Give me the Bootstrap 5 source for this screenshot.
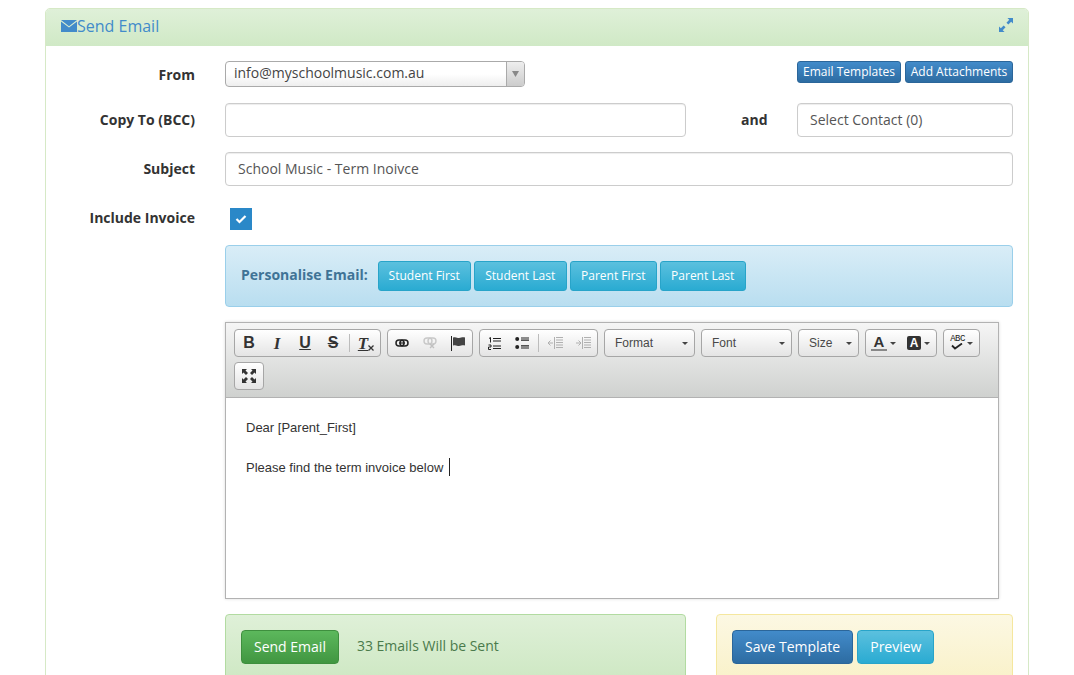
<!DOCTYPE html>
<html lang="en">
<head>
<meta charset="utf-8">
<title>Send Email</title>
<link rel="stylesheet" href="https://cdn.jsdelivr.net/npm/bootstrap@5.3.0/dist/css/bootstrap.min.css">
<style>
html,body{height:675px;overflow:hidden;background:#fff}
body{font-family:"Open Sans",sans-serif;font-size:14px;color:#555}
.mail-panel{margin:8px 45px 0;border:1px solid #d6e9c6;border-radius:5px;height:800px;background:#fff}
.mail-head{height:37px;padding:0 15px 3px;background:linear-gradient(#dff0d8,#d0e9c6);border-radius:4px 4px 0 0;color:#428bca;font-size:16px}
.exp-ico{margin-top:-3px;margin-right:0}
.mail-body{padding:15px 15px 0 15px}
.lbl{width:134px;text-align:right;font-weight:700;color:#333;margin-right:30px;flex:none;padding-bottom:2px}
.lbl-top{padding:3px 0 0}
.lbl-inc{padding-bottom:4px}
.and-txt{margin-left:55px;font-weight:700;color:#333;padding-bottom:2px}
.r1{height:26px;margin-bottom:16px}
.r2{height:34px;margin-bottom:15px}
.r2b{margin-bottom:22px}
.r4{height:22px;margin-bottom:15px}
.pick{width:300px;height:26px;border:1px solid #aaa;border-radius:4px;background:linear-gradient(#fff 50%,#eee);color:#444;line-height:22px;padding-left:8px;overflow:hidden}
.pick-arrow{width:18px;height:24px;margin-left:auto;background:linear-gradient(#eee,#ccc);border-left:1px solid #aaa;flex:none}
.inp{height:34px;border:1px solid #ccc;border-radius:4px;padding:0 12px;line-height:32px;color:#555;box-shadow:inset 0 1px 1px rgba(0,0,0,.075);background:#fff}
.w-copy{width:461px}
.w-contact{width:216px}
.tiny-row{gap:4px}
.btn.tiny{font-size:12px;line-height:18px;padding:1px 0;border-radius:3px;height:22px}
.w-et{width:104px}
.w-aa{width:108px}
.btn.blue{background:linear-gradient(#428bca,#2d6ca2);border:1px solid #2b669a;color:#fff}
.btn.cyan{background:linear-gradient(#5bc0de,#2aabd2);border:1px solid #28a4c9;color:#fff}
.btn.grn{background:linear-gradient(#5cb85c,#419641);border:1px solid #3e8f3e;color:#fff}
.btn.mid{font-size:14px;line-height:20px;padding:6px 12px;border-radius:4px;height:34px}
.btn.sm2{font-size:12px;line-height:18px;padding:5px 0;border-radius:3px;height:30px}
.w-93{width:93px}
.w-87{width:87px}
.w-86{width:86px}
.tick{width:22px;height:22px;background:#2a88c8;margin-left:5px}
.indent-col{margin-left:164px}
.note{border-radius:4px;border:1px solid}
.note-info{height:62px;padding:0 15px;margin-bottom:15px;background:linear-gradient(#d9edf7,#b9def0);border-color:#9acfea;color:#3f7396;font-weight:700}
.pers-lbl{margin-right:10px;padding-bottom:3px}
.pers-row{gap:3px}
.note-ok{height:90px;width:461px;padding:15px;background:linear-gradient(#dff0d8,#c8e5bc);border-color:#b2dba1;color:#4a7a4b}
.sent-txt{margin:5px 0 0 18px}
.note-warn{height:90px;width:297px;padding:15px;gap:4px;background:linear-gradient(#fcf8e3,#f8efc0);border-color:#f5e79e}
.edt{width:774px;height:277px;border:1px solid #b2b2b2;margin-bottom:15px;box-shadow:0 0 3px rgba(0,0,0,.15)}
.tbar{height:75px;padding:6px 0 0 8px;background:linear-gradient(#f5f5f5,#cfd1cf);border-bottom:1px solid #b2b2b2;display:flex;flex-wrap:wrap;gap:5px 6px;align-content:flex-start}
.tgrp{height:28px;border:1px solid #a6a6a6;border-radius:4px;background:linear-gradient(#fff,#e4e4e4);display:flex;align-items:center;color:#333}
.tb{width:28px;height:26px;display:flex;align-items:center;justify-content:center;font-family:"Liberation Sans",sans-serif;font-size:16px;line-height:1;color:#333;font-weight:700}
.tb-serif{font-family:"Liberation Serif",serif;font-style:italic;font-size:17px}
.tb-under{text-decoration:underline}
.tb-strike{text-decoration:line-through}
.x-sub{margin-top:9px}
.tsep{width:1px;height:18px;margin:0 2px;background:#bcbcbc}
.combo{font-family:"Liberation Sans",sans-serif;font-size:12px;padding:0 6px 0 10px;justify-content:space-between;color:#484848}
.w-91{width:91px}
.w-61{width:61px}
.w-72{width:72px}
.w-37{width:37px}
.w-30{width:30px}
.caret{width:0;height:0;border-left:3px solid transparent;border-right:3px solid transparent;border-top:3px solid #444;flex:none}
.col-btn{width:35px;gap:3px}
.col-a{font-family:"Liberation Sans",sans-serif;font-weight:700;font-size:15px;line-height:14px;border-bottom:2px solid #888;width:16px;text-align:center}
.col-b{font-family:"Liberation Sans",sans-serif;font-weight:700;font-size:12px;line-height:14px;background:#333;color:#fff;width:14px;height:14px;border-radius:2px;text-align:center}
.spell{gap:2px}
.abc{font-size:9px;line-height:7px;font-family:"Liberation Mono",monospace;letter-spacing:-.5px;color:#222}
.edt-text{padding:20px;font-family:"Liberation Sans",sans-serif;font-size:13px;line-height:20px;color:#333}
.edt-text p{margin:0 0 20px}
.cursor{display:inline-block;width:1px;height:18px;background:#222;margin-left:2px;vertical-align:-4px}
</style>
</head>
<body>
<div class="mail-panel">
  <div class="mail-head d-flex align-items-center">
    <svg width="16" height="12" viewBox="0 0 16 12"><path fill="#428bca" d="M0 0h16L8 6.200zM0 1.600l8 6 8-6V12H0z"/></svg>
    <span>Send Email</span>
    <svg class="ms-auto exp-ico" width="14" height="14" viewBox="0 0 15 15"><path fill="#428bca" d="M9 0h6v6l-2-2-3 3-2-2 3-3zM6 15H0V9l2 2 3-3 2 2-3 3z"/></svg>
  </div>
  <div class="mail-body">
    <div class="d-flex r1">
      <div class="lbl lbl-top">From</div>
      <div class="pick d-flex"><span>info@myschoolmusic.com.au</span>
        <div class="pick-arrow d-flex align-items-center justify-content-center"><svg width="7" height="6" viewBox="0 0 7 6"><path fill="#888" d="M0 0h7L3.500 6z"/></svg></div>
      </div>
      <div class="ms-auto d-flex tiny-row">
        <button class="btn tiny blue w-et" type="button">Email Templates</button>
        <button class="btn tiny blue w-aa" type="button">Add Attachments</button>
      </div>
    </div>
    <div class="d-flex r2 align-items-center">
      <div class="lbl">Copy To (BCC)</div>
      <div class="inp w-copy"></div>
      <div class="and-txt">and</div>
      <div class="inp w-contact ms-auto">Select Contact (0)</div>
    </div>
    <div class="d-flex r2 r2b align-items-center">
      <div class="lbl">Subject</div>
      <div class="inp flex-grow-1">School Music - Term Inoivce</div>
    </div>
    <div class="d-flex r4 align-items-center">
      <div class="lbl lbl-inc">Include Invoice</div>
      <div class="tick d-flex align-items-center justify-content-center"><svg width="12" height="10" viewBox="0 0 12 10"><path d="M1.500 5l3 3 6-6" fill="none" stroke="#fff" stroke-width="2.200"/></svg></div>
    </div>
    <div class="indent-col">
      <div class="note note-info d-flex align-items-center">
        <span class="pers-lbl">Personalise Email:</span>
        <div class="d-flex pers-row">
          <button class="btn sm2 cyan w-93" type="button">Student First</button>
          <button class="btn sm2 cyan w-93" type="button">Student Last</button>
          <button class="btn sm2 cyan w-87" type="button">Parent First</button>
          <button class="btn sm2 cyan w-86" type="button">Parent Last</button>
        </div>
      </div>
      <div class="edt">
        <div class="tbar">
          <div class="tgrp">
            <div class="tb">B</div><div class="tb tb-serif">I</div><div class="tb tb-under">U</div><div class="tb tb-strike">S</div><div class="tsep"></div>
            <div class="tb tb-serif"><span class="tb-under">T</span><svg class="x-sub" width="6" height="6" viewBox="0 0 6 6"><path d="M.5.5l5 5M5.500.5l-5 5" stroke="#333" stroke-width="1.300"/></svg></div>
          </div>
          <div class="tgrp">
            <div class="tb"><svg width="14" height="8" viewBox="0 0 14 8"><rect x="1" y="1" width="8" height="6" rx="3" fill="none" stroke="#222" stroke-width="1.500"/><rect x="5" y="1" width="8" height="6" rx="3" fill="none" stroke="#222" stroke-width="1.500"/><path d="M4 4h6" stroke="#222" stroke-width="1.200"/></svg></div>
            <div class="tb"><svg width="14" height="12" viewBox="0 0 14 12"><rect x="1" y="1" width="8" height="6" rx="3" fill="none" stroke="#c8c8c8" stroke-width="1.400"/><rect x="5" y="1" width="8" height="6" rx="3" fill="none" stroke="#c8c8c8" stroke-width="1.400"/><path d="M7 7l4 4M11 7l-4 4" stroke="#c0c0c0" stroke-width="1.400"/></svg></div>
            <div class="tb"><svg width="14" height="15" viewBox="0 0 14 15"><path d="M.5 0v15" stroke="#222"/><path fill="#444" d="M2 1.500c3-1 4 .5 6 .5s3-1 6-.5v8c-3-.5-4 .5-6 .5s-3-1.500-6-.5z"/></svg></div>
          </div>
          <div class="tgrp">
            <div class="tb"><svg width="13" height="13" viewBox="0 0 13 13"><path d="M5 1.500h8M5 4h8M5 9h8M5 11.500h8" stroke="#222" stroke-width="1.200"/><path d="M1 1.500l1.500-1V5.500M.5 8h2.500v2H.5v2.500H3" fill="none" stroke="#222"/></svg></div>
            <div class="tb"><svg width="14" height="12" viewBox="0 0 14 12"><circle cx="2.200" cy="2" r="2" fill="#222"/><circle cx="2.200" cy="10" r="2" fill="#222"/><path d="M6 1h8M6 3.200h8M6 8.800h8M6 11h8" stroke="#222" stroke-width="1.200"/></svg></div>
            <div class="tsep"></div>
            <div class="tb"><svg width="15" height="12" viewBox="0 0 15 12"><path d="M8 .5h7M8 3h7M8 5.500h7M8 8h7M8 10.500h7M6.500 0v12" stroke="#b0b0b0"/><path d="M0 6h5M2.500 3.500L0 6l2.500 2.500" fill="none" stroke="#b0b0b0"/></svg></div>
            <div class="tb"><svg width="15" height="12" viewBox="0 0 15 12"><path d="M8 .5h7M8 3h7M8 5.500h7M8 8h7M8 10.500h7M6.500 0v12" stroke="#b0b0b0"/><path d="M0 6h5M2.500 3.500L5 6l-2.500 2.500" fill="none" stroke="#b0b0b0"/></svg></div>
          </div>
          <div class="tgrp combo w-91">Format<span class="caret"></span></div>
          <div class="tgrp combo w-91">Font<span class="caret"></span></div>
          <div class="tgrp combo w-61">Size<span class="caret"></span></div>
          <div class="tgrp w-72">
            <div class="d-flex align-items-center justify-content-center col-btn"><span class="col-a">A</span><span class="caret"></span></div>
            <div class="d-flex align-items-center justify-content-center col-btn"><span class="col-b">A</span><span class="caret"></span></div>
          </div>
          <div class="tgrp justify-content-center spell w-37">
            <div class="d-flex flex-column align-items-center"><span class="abc">ABC</span><svg width="12" height="7" viewBox="0 0 12 7"><path d="M1 2.500l3 3 7-5" fill="none" stroke="#222" stroke-width="1.800"/></svg></div><span class="caret"></span>
          </div>
          <div class="tgrp justify-content-center w-30"><svg width="16" height="16" viewBox="0 0 16 16"><path fill="#333" d="M1 1h5L4.500 2.500 7 5 5 7 2.500 4.500 1 6zM15 1v5l-1.500-1.500L11 7 9 5l2.500-2.500L10 1zM1 15v-5l1.500 1.500L5 9l2 2-2.500 2.500L6 15zM15 15h-5l1.500-1.500L9 11l2-2 2.500 2.500L15 10z"/></svg></div>
        </div>
        <div class="edt-text">
          <p>Dear [Parent_First]</p>
          <p>Please find the term invoice below <span class="cursor"></span></p>
        </div>
      </div>
      <div class="d-flex justify-content-between">
        <div class="note note-ok d-flex align-items-start">
          <button class="btn mid grn" type="button">Send Email</button>
          <span class="sent-txt">33 Emails Will be Sent</span>
        </div>
        <div class="note note-warn d-flex align-items-start">
          <button class="btn mid blue" type="button">Save Template</button>
          <button class="btn mid cyan" type="button">Preview</button>
        </div>
      </div>
    </div>
  </div>
</div>
<script src="https://cdn.jsdelivr.net/npm/bootstrap@5.3.0/dist/js/bootstrap.bundle.min.js"></script>
</body>
</html>
